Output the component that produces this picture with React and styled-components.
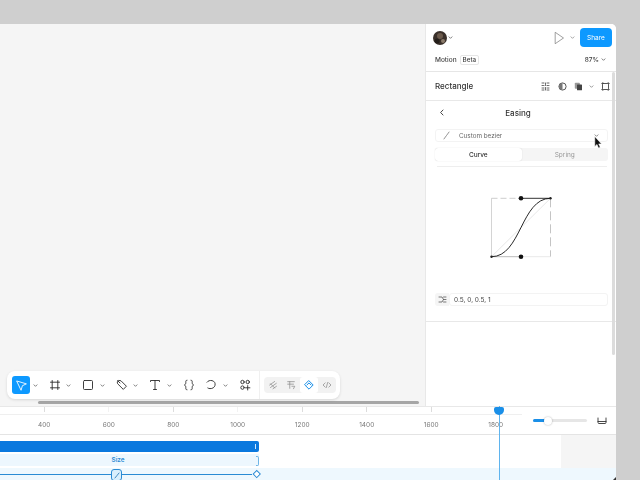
import React from "react";
import styled, { createGlobalStyle } from "styled-components";

const Global = createGlobalStyle`
  html, body { margin: 0; padding: 0; width: 640px; height: 480px; overflow: hidden; background: #cfcfcf; }
  body { font-family: Inter, "Liberation Sans", sans-serif; -webkit-font-smoothing: antialiased; }
  #root { width: 640px; height: 480px; }
`;

const Page = styled.div`
  position: relative;
  width: 640px;
  height: 480px;
  padding: 24px 24px 0 0;
  box-sizing: border-box;
  overflow: hidden;
  filter: blur(0.4px);
`;
const Win = styled.div`
  position: relative;
  width: 616px;
  height: 456px;
  background: #fff;
  border-top-right-radius: 5px;
  display: flex;
  flex-direction: column;
  overflow: hidden;
`;
const Upper = styled.div`
  display: flex;
  height: 382px;
  flex: none;
`;
const Canvas = styled.div`
  position: relative;
  width: 425px;
  flex: none;
  background: #f5f5f5;
`;
const Toolbar = styled.div`
  position: absolute;
  left: 7px;
  top: 347px;
  width: 333px;
  height: 28px;
  box-sizing: border-box;
  padding: 0 4px 0 5px;
  display: flex;
  align-items: center;
  background: #fff;
  border-radius: 8px;
  box-shadow: 0 1px 3px rgba(0, 0, 0, 0.12);
`;
const Tool = styled.div`
  width: 18px;
  height: 18px;
  flex: none;
  display: flex;
  align-items: center;
  justify-content: center;
  border-radius: 3px;
  color: #2a2a2a;
  margin-left: ${(p) => p.$ml || 0}px;
  background: ${(p) => (p.$active ? "#0d99ff" : "transparent")};
`;
const Chev = styled.div`
  width: 15.5px;
  height: 18px;
  flex: none;
  box-sizing: border-box;
  padding-left: 2.500px;
  display: flex;
  align-items: center;
  color: #555;
`;
const Sep = styled.div`
  width: 1px;
  height: 28px;
  background: #f0f0f0;
  margin: 0 4px 0 5px;
  flex: none;
`;
const Modes = styled.div`
  display: flex;
  align-items: center;
  height: 16px;
  background: #f2f2f2;
  border-radius: 4px;
  flex: none;
  width: 72px;
`;
const Mode = styled.div`
  width: 18px;
  height: 16px;
  display: flex;
  align-items: center;
  justify-content: center;
  border-radius: 3px;
  color: ${(p) => (p.$active ? "#1a8fe8" : "#8c8c8c")};
  background: ${(p) => (p.$active ? "#fff" : "transparent")};
`;
const HScroll = styled.div`
  position: absolute;
  left: 38px;
  top: 377px;
  width: 381px;
  height: 3px;
  background: #a6a6a6;
  border-radius: 2px;
`;
const Panel = styled.div`
  position: relative;
  width: 191px;
  flex: none;
  box-sizing: border-box;
  border-left: 1px solid #e8e8e8;
  background: #fff;
  color: #2a2a2a;
`;
const TopRow = styled.div`
  height: 27px;
  display: flex;
  align-items: center;
  padding: 0 4px 0 7px;
`;
const Avatar = styled.div`
  width: 14px;
  height: 14px;
  border-radius: 50%;
  overflow: hidden;
  flex: none;
  line-height: 0;
`;
const Spacer = styled.div`
  flex: 1;
`;
const SmallChev = styled.span`
  display: inline-flex;
  align-items: center;
  justify-content: center;
  color: ${(p) => p.$c || "#555"};
  margin: ${(p) => p.$m || "0"};
  line-height: 0;
`;
const Share = styled.div`
  width: 32px;
  height: 19px;
  margin-left: 3px;
  background: #0d99ff;
  color: #fff;
  border-radius: 4px;
  font-size: 6.5px;
  font-weight: 400;
  display: flex;
  align-items: center;
  justify-content: center;
`;
const MotionRow = styled.div`
  height: 21px;
  box-sizing: border-box;
  display: flex;
  align-items: center;
  padding: 0 10px 3px 9px;
  border-bottom: 1px solid #e6e6e6;
  font-size: 6.5px;
  font-weight: 500;
  color: #444;
`;
const Beta = styled.span`
  margin-left: 3px;
  padding: 0 2px;
  height: 8px;
  line-height: 8px;
  border: 1px solid #e6e6e6;
  border-radius: 2px;
  font-size: 6.3px;
`;
const TitleRow = styled.div`
  height: 28px;
  display: flex;
  align-items: center;
  padding: 0 6px 0 9px;
  border-bottom: 1px solid #e8e8e8;
  font-size: 8px;
  font-weight: 500;
  color: #333;
`;
const RowIcon = styled.span`
  display: inline-flex;
  width: 10px;
  height: 10px;
  align-items: center;
  justify-content: center;
  color: #444;
  margin-left: ${(p) => p.$ml}px;
  line-height: 0;
`;
const EasingHead = styled.div`
  height: 23px;
  display: flex;
  align-items: center;
  position: relative;
  justify-content: center;
  padding-right: 6px;
  box-sizing: border-box;
  font-size: 8px;
  font-weight: 500;
  color: #333;
  & > svg {
    position: absolute;
    left: 13px;
    top: 8px;
  }
`;
const Select = styled.div`
  margin: 5px 8px 0 9px;
  height: 13px;
  border: 1px solid #f3f3f3;
  border-radius: 3px;
  box-sizing: border-box;
  display: flex;
  align-items: center;
  padding: 0 8px 0 7px;
  font-size: 6.3px;
  color: #666;
  gap: 9px;
`;
const Tabs = styled.div`
  margin: 6px 8px 0 9px;
  height: 13px;
  display: flex;
  background: #f5f5f5;
  border-radius: 3px;
`;
const Tab = styled.div`
  flex: 1;
  display: flex;
  align-items: center;
  justify-content: center;
  font-size: 6.5px;
  font-weight: ${(p) => (p.$on ? 500 : 400)};
  color: ${(p) => (p.$on ? "#333" : "#999")};
  background: ${(p) => (p.$on ? "#fff" : "transparent")};
  border-radius: 3px;
  box-shadow: ${(p) => (p.$on ? "0 0 1px rgba(0,0,0,.22)" : "none")};
`;
const Divider = styled.div`
  margin: 5px 9px 0 11px;
  height: 1px;
  background: #eeeeee;
`;
const Graph = styled.div`
  height: 126px;
  display: flex;
  justify-content: center;
  padding-top: 25px;
  box-sizing: border-box;
  line-height: 0;
`;
const ValueRow = styled.div`
  margin: 0 8px 0 9px;
  height: 13px;
  display: flex;
`;
const ValueIcon = styled.div`
  width: 14px;
  background: #f5f5f5;
  display: flex;
  align-items: center;
  justify-content: center;
  color: #444;
  border-radius: 3px 0 0 3px;
`;
const ValueInput = styled.div`
  flex: 1;
  border: 1px solid #f3f3f3;
  border-radius: 3px;
  box-sizing: border-box;
  padding-left: 4px;
  font-size: 6.5px;
  color: #444;
  display: flex;
  align-items: center;
`;
const PanelLine = styled.div`
  margin-top: 15px;
  height: 1px;
  background: #e8e8e8;
`;
const VScroll = styled.div`
  position: absolute;
  left: 186px;
  top: 48px;
  width: 3px;
  height: 283px;
  background: #dcdcdc;
  border-radius: 2px;
`;
const Cursor = styled.div`
  position: absolute;
  left: 168px;
  top: 112px;
  line-height: 0;
`;
const Ruler = styled.div`
  height: 29px;
  flex: none;
  display: flex;
  border-top: 1px solid #e8e8e8;
  border-bottom: 1px solid #e4e4e4;
  box-sizing: border-box;
`;
const Scale = styled.div`
  width: 522px;
  flex: none;
`;
const Ticks = styled.div`
  height: 7px;
  display: flex;
  padding-left: 12px;
  border-bottom: 1px solid #efefef;
`;
const Tick = styled.div`
  width: 64.5px;
  flex: none;
  display: flex;
  justify-content: center;
  &::after {
    content: "";
    width: 1px;
    height: 5px;
    background: ${(p) => (p.$faint ? "#f2f2f2" : "#dcdcdc")};
  }
`;
const Labels = styled.div`
  display: flex;
  padding-left: 12px;
  height: 19px;
  align-items: center;
`;
const Label = styled.div`
  width: 64.5px;
  flex: none;
  text-align: center;
  font-size: 6.5px;
  color: #777;
`;
const Zoom = styled.div`
  flex: 1;
  display: flex;
  align-items: center;
  padding: 0 9px 0 11px;
`;
const Track = styled.div`
  position: relative;
  width: 54px;
  height: 3px;
  background: #e6e6e6;
  border-radius: 2px;
  flex: none;
`;
const Fill = styled.div`
  height: 3px;
  background: #1a8fe8;
  border-radius: 2px;
`;
const Knob = styled.div`
  position: absolute;
  left: 11px;
  top: -2.5px;
  width: 8px;
  height: 8px;
  border-radius: 50%;
  background: #fff;
  box-shadow: 0 0 2px rgba(0, 0, 0, 0.3);
`;
const Rows = styled.div`
  flex: 1;
  display: flex;
  flex-direction: column;
  min-height: 0;
`;
const Upper2 = styled.div`
  height: 33px;
  flex: none;
  display: flex;
  justify-content: space-between;
`;
const Bars = styled.div`
  width: 259px;
  padding-top: 6px;
  box-sizing: border-box;
`;
const Bar = styled.div`
  height: 11px;
  background: #0a78de;
  border-radius: 0 2px 2px 0;
  display: flex;
  justify-content: flex-end;
  align-items: center;
  padding-right: 3px;
  &::after {
    content: "";
    width: 1px;
    height: 5px;
    background: #cfe6fb;
  }
`;
const SizeBar = styled.div`
  position: relative;
  margin-top: 2px;
  height: 12px;
  background: #edf7fe;
  display: flex;
  align-items: center;
  justify-content: center;
  font-size: 6.3px;
  font-weight: 600;
  color: #2a8bd4;
  padding-right: 23px;
  box-sizing: border-box;
`;
const Bracket = styled.div`
  position: absolute;
  right: 0;
  top: 2px;
  width: 2px;
  height: 8px;
  border: 1px solid #6fb5e6;
  border-left: none;
  border-radius: 0 2px 2px 0;
`;
const Gutter = styled.div`
  width: 55px;
  background: #f5f5f5;
`;
const CurveRow = styled.div`
  position: relative;
  flex: 1;
  background: #eef8fe;
  display: flex;
  align-items: center;
  width: 100%;
`;
const Line = styled.div`
  width: 252px;
  height: 1px;
  background: #2a8bd4;
  flex: none;
`;
const EaseNode = styled.div`
  position: absolute;
  left: 111px;
  top: 1px;
  width: 9px;
  height: 10px;
  border: 1px solid #2a8bd4;
  border-radius: 3px;
  background: #d9effc;
  display: flex;
  align-items: center;
  justify-content: center;
  color: #1a6fb0;
  line-height: 0;
`;
const EndDiamond = styled.div`
  margin-left: 2px;
  width: 3.5px;
  height: 3.5px;
  transform: rotate(45deg);
  border: 1px solid #2a8bd4;
  background: #fff;
  flex: none;
`;
const Playhead = styled.div`
  position: absolute;
  left: 499px;
  top: 382px;
  width: 1px;
  bottom: 0;
  background: #5fb4ee;
  &::before {
    content: "";
    position: absolute;
    left: -5px;
    top: 1px;
    width: 10px;
    height: 8px;
    background: #1a8fe8;
    border-radius: 2px 2px 5px 5px;
  }
`;
const Corner = styled.div`
  position: absolute;
  right: 0;
  bottom: 0;
  width: 0;
  height: 0;
  border-left: 3px solid transparent;
  border-bottom: 3px solid #333;
`;

const Ic = ({ w = 12, h = 12, vb, sw = 0.9, children, fill = "none" }) => (
  <svg width={w} height={h} viewBox={vb || `0 0 ${w} ${h}`} fill={fill} stroke="currentColor" strokeWidth={sw} strokeLinecap="round" strokeLinejoin="round">
    {children}
  </svg>
);
const Down = ({ s = 5 }) => (
  <Ic w={s} h={s} vb="0 0 6 6" sw={0.9}><path d="M1.2 2.2 3 4l1.8-1.8" /></Ic>
);

const labels = [400, 600, 800, 1000, 1200, 1400, 1600, 1800];

export default function App() {
  return (
    <Page>
      <Global />
      <Win>
        <Upper>
          <Canvas>
            <HScroll />
            <Toolbar>
              <Tool $active>
                <svg width="13" height="13" viewBox="0 0 12 12" fill="none" stroke="#fff" strokeWidth="0.8" strokeLinejoin="round"><path d="M1.5 1.8 10.500 4.500 6.800 6.200 5.600 10.400Z" /></svg>
              </Tool>
              <Chev><Down /></Chev>
              <Tool><Ic><path d="M3.2 1.500v9M8.800 1.500v9M1.500 3.200h9M1.500 8.800h9" /></Ic></Tool>
              <Chev><Down /></Chev>
              <Tool><Ic><rect x="1.500" y="1.500" width="9" height="9" rx="1" /></Ic></Tool>
              <Chev><Down /></Chev>
              <Tool><Ic><path d="M1.500 2.600 2.800 1.400 5 1.800 10.400 7.200 7.300 10.400 1.900 5Z" /><path d="M1.600 1.600 4 4" /></Ic></Tool>
              <Chev><Down /></Chev>
              <Tool><Ic><path d="M1.500 2.500V1.500h9v1M6 1.500v9M4.500 10.500h3" /></Ic></Tool>
              <Chev><Down /></Chev>
              <Tool><Ic><path d="M4 1.200c-1.400 0-1.200 1-1.200 2.200S2.600 5.400 1.500 6c1.100.6 1.300 1.400 1.300 2.600s-.2 2.200 1.200 2.200M8 1.200c1.400 0 1.200 1 1.200 2.200S9.400 5.400 10.500 6c-1.100.6-1.300 1.400-1.300 2.600s.2 2.200-1.200 2.200" /></Ic></Tool>
              <Tool $ml={4.5}><Ic><path d="M2 3.200C3 1.800 5 1.200 7 1.600c2.400.5 3.600 2.600 3 4.800-.5 2-2.600 3.400-5 3.200-.8 0-1.600-.2-2.200-.6" /></Ic></Tool>
              <Chev><Down /></Chev>
              <Tool><Ic><circle cx="3.500" cy="3" r="1.700" /><circle cx="8.700" cy="3" r="1.700" /><circle cx="3.500" cy="8.600" r="1.700" /><path d="M8.700 6.600v4.400M6.500 8.800h4.400" /></Ic></Tool>
              <Sep />
              <Modes>
                <Mode><Ic w={10} h={10} vb="0 0 12 12"><path d="M2 6 8 1.800M3 9l7-5M6 10.500l4.200-3M3 4.500l5 5" /></Ic></Mode>
                <Mode><Ic w={10} h={10} vb="0 0 12 12"><path d="M2 2h8M2 5h7M4.500 2v8M7 7.500h3.500l-1.500 3" /></Ic></Mode>
                <Mode $active><Ic w={10} h={10} vb="0 0 12 12" sw={1.2}><path d="M6 1 11 6 6 11 1 6Z" /><path d="M3.500 6 6 3.500 8.500 6" /></Ic></Mode>
                <Mode><Ic w={10} h={10} vb="0 0 12 12"><path d="M3.800 3.500 1.200 6l2.600 2.500M8.200 3.500 10.800 6 8.200 8.500M6.800 3 5.200 9" /></Ic></Mode>
              </Modes>
            </Toolbar>
          </Canvas>
          <Panel>
            <TopRow>
              <Avatar>
                <svg width="14" height="14" viewBox="0 0 14 14">
                  <rect width="14" height="14" fill="#3a302a" />
                  <circle cx="7" cy="5" r="3" fill="#6b5a4c" />
                  <circle cx="4" cy="10" r="2.500" fill="#241e1a" />
                  <circle cx="10" cy="10" r="2" fill="#8a7a6a" />
                </svg>
              </Avatar>
              <SmallChev $m="0 0 0 1px"><Down /></SmallChev>
              <Spacer />
              <SmallChev $c="#777" $m="0 3px 0 0">
                <Ic w={11} h={14} vb="0 0 11 14" sw={0.7}><path d="M1.500 1.500 9.500 7 1.500 12.500Z" /></Ic>
              </SmallChev>
              <SmallChev $c="#888" $m="0 2px 0 2px"><Down /></SmallChev>
              <Share>Share</Share>
            </TopRow>
            <MotionRow>
              Motion
              <Beta>Beta</Beta>
              <Spacer />
              87%
              <SmallChev $m="0 0 0 2px"><Down /></SmallChev>
            </MotionRow>
            <TitleRow>
              Rectangle
              <Spacer />
              <RowIcon $ml={0}>
                <Ic w={9} h={9} vb="0 0 9 9" sw={0.8}><path d="M1 1h2M1 3.500h2M1 6h2M1 8h2M6 1h2M6 3.500h2M6 6h2M6 8h2M4.500 1v2.500M4.500 5.500V8" strokeDasharray="1 .6" /></Ic>
              </RowIcon>
              <RowIcon $ml={7}>
                <svg width="9" height="9" viewBox="0 0 9 9"><circle cx="4.500" cy="4.500" r="3.600" fill="none" stroke="#444" strokeWidth="0.9" /><path d="M4.500 1a3.500 3.500 0 0 0 0 7Z" fill="#777" /></svg>
              </RowIcon>
              <RowIcon $ml={6}>
                <svg width="9" height="9" viewBox="0 0 9 9"><rect x="0.800" y="0.800" width="5" height="6" rx="0.800" fill="#999" /><rect x="3" y="2.500" width="5" height="5.800" rx="0.600" fill="#444" /></svg>
              </RowIcon>
              <SmallChev $c="#777" $m="0 0 0 5.500px"><Down /></SmallChev>
              <RowIcon $ml={6.5}>
                <Ic w={9} h={9} vb="0 0 9 9" sw={0.9}><rect x="1.500" y="1.500" width="6" height="6" rx="0.600" /><path d="M.8 1.500h1V.6M8.200 1.500h-1V.6M.8 7.500h1v.9M8.200 7.500h-1v.9" /></Ic>
              </RowIcon>
            </TitleRow>
            <EasingHead>
              <Ic w={6} h={7} vb="0 0 6 7" sw={0.9}><path d="M4 1 1.600 3.500 4 6" /></Ic>
              Easing
            </EasingHead>
            <Select>
              <Ic w={7} h={9} vb="0 0 7 9" sw={0.7}><path d="M1 8C3 6 4 3 6 1" /></Ic>
              Custom bezier
              <Spacer />
              <Down />
            </Select>
            <Tabs>
              <Tab $on>Curve</Tab>
              <Tab>Spring</Tab>
            </Tabs>
            <Divider />
            <Graph>
              <svg width="70" height="70" viewBox="0 0 70 70" fill="none">
                <path d="M5.500 64.700 64.500 6.300" stroke="#dcdcdc" strokeWidth="0.7" />
                <path d="M5.500 6.300V64.700" stroke="#c9c9c9" strokeWidth="0.8" />
                <path d="M5.500 6.300H35" stroke="#c0c0c0" strokeWidth="0.8" strokeDasharray="6 3" />
                <path d="M64.500 6.300V64.700" stroke="#b5b5b5" strokeWidth="0.8" strokeDasharray="9 4" />
                <path d="M35 64.700H64.500" stroke="#e2e2e2" strokeWidth="0.8" />
                <path d="M5.500 64.700H35" stroke="#a8a8a8" strokeWidth="0.8" />
                <path d="M35 6.300H64.500" stroke="#333" strokeWidth="1" />
                <path d="M5.500 64.700C35 64.700 35 6.300 64.500 6.300" stroke="#111" strokeWidth="0.9" />
                <circle cx="35" cy="6.300" r="2.300" fill="#111" />
                <circle cx="35" cy="64.700" r="2.300" fill="#111" />
                <circle cx="5.500" cy="64.700" r="1.200" fill="#222" />
                <circle cx="64.500" cy="6.300" r="1.200" fill="#222" />
              </svg>
            </Graph>
            <ValueRow>
              <ValueIcon>
                <Ic w={9} h={9} vb="0 0 9 9" sw={0.7}><path d="M1 2h3l1.500 2.500H8M1 7h3l1.500-2.500M5.500 2H8M5.500 7H8" /></Ic>
              </ValueIcon>
              <ValueInput>0.5, 0, 0.5, 1</ValueInput>
            </ValueRow>
            <PanelLine />
            <VScroll />
            <Cursor>
              <svg width="8" height="13" viewBox="0 0 8 13"><path d="M.8.6V10.400L3 8.400 4.500 12 6.200 11.300 4.700 7.900H7.500Z" fill="#111" stroke="#fff" strokeWidth="0.5" /></svg>
            </Cursor>
          </Panel>
        </Upper>
        <Ruler>
          <Scale>
            <Ticks>
              {labels.map((l) => <Tick key={l} $faint={l === 1000 || l === 600} />)}
            </Ticks>
            <Labels>
              {labels.map((l) => <Label key={l}>{l}</Label>)}
            </Labels>
          </Scale>
          <Zoom>
            <Track>
              <Fill style={{ width: "26%" }} />
              <Knob />
            </Track>
            <Spacer />
            <SmallChev $c="#333">
              <Ic w={10} h={8} vb="0 0 10 8" sw={0.9}><path d="M1 1v4.500a1 1 0 0 0 1 1h6a1 1 0 0 0 1-1V1M1 4.500h8" /></Ic>
            </SmallChev>
          </Zoom>
        </Ruler>
        <Rows>
          <Upper2>
            <Bars>
              <Bar />
              <SizeBar>Size<Bracket /></SizeBar>
            </Bars>
            <Gutter />
          </Upper2>
          <CurveRow>
            <Line />
            <EndDiamond />
            <EaseNode>
              <Ic w={6} h={7} vb="0 0 6 7" sw={0.8}><path d="M1 6C2.500 4.500 3.500 2.500 5 1" /></Ic>
            </EaseNode>
          </CurveRow>
        </Rows>
        <Playhead />
        <Corner />
      </Win>
    </Page>
  );
}
